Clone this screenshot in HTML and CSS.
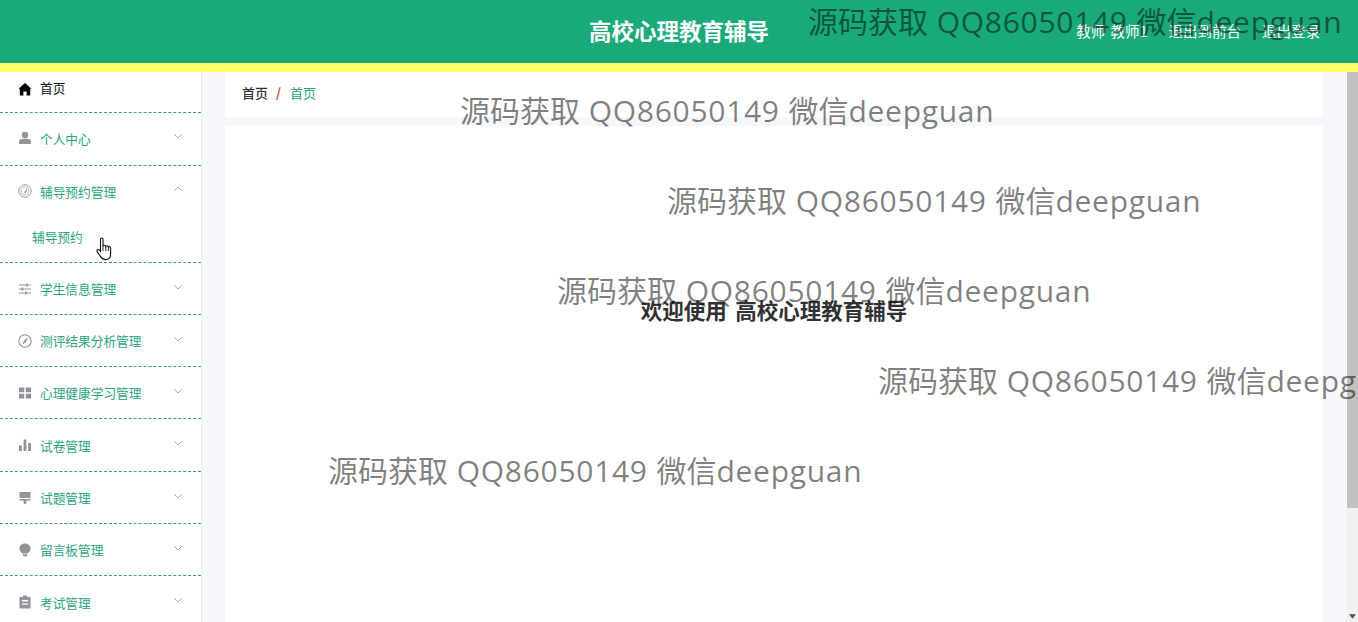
FILE: index.html
```html
<!DOCTYPE html>
<html lang="zh">
<head>
<meta charset="utf-8">
<title>高校心理教育辅导</title>
<link rel="stylesheet" href="styles.css">
</head>
<body>
<header class="topbar">
  <div class="brand">高校心理教育辅导</div>
  <nav class="topnav">
    <span class="user">教师 教师1</span>
    <span>退出到前台</span>
    <span>退出登录</span>
  </nav>
</header>
<div class="main">
  <aside class="sidebar">
    <div class="menu-item home">
      <svg class="ico" viewBox="0 0 14 14"><path d="M7 1 L.6 6.8 H1.8 V13.6 H5.4 V9.6 H8.6 V13.6 H12.2 V6.8 H13.4 Z" fill="#000"/></svg>
      <span>首页</span>
    </div>
    <div class="menu-item tall first">
      <svg class="ico" viewBox="0 0 14 14"><circle cx="7" cy="4" r="3.2" fill="#909399"/><path d="M1 13 V10.5 C1 8.5 4 7.8 7 7.8 C10 7.8 13 8.5 13 10.5 V13 Z" fill="#909399"/></svg>
      <span>个人中心</span>
      <svg class="arrow" viewBox="0 0 10 6"><path d="M1 1 L5 5 L9 1" /></svg>
    </div>
    <div class="menu-group">
      <div class="menu-item open">
        <svg class="ico" viewBox="0 0 14 14"><circle cx="7" cy="7" r="6.2" fill="none" stroke="#909399"/><circle cx="7" cy="7" r="4" fill="none" stroke="#909399" stroke-width=".6"/><path d="M6 8.5 L9.5 3.5 L8 9 Z" fill="#909399"/></svg>
        <span>辅导预约管理</span>
        <svg class="arrow" viewBox="0 0 10 6"><path d="M1 5 L5 1 L9 5" /></svg>
      </div>
      <div class="submenu">辅导预约</div>
    </div>
    <div class="menu-item">
      <svg class="ico" viewBox="0 0 14 14"><path d="M1 3 H13 M1 7 H13 M1 11 H13" stroke="#909399" fill="none"/><rect x="8" y="1.5" width="1.6" height="3" fill="#909399"/><rect x="3.6" y="5.5" width="1.6" height="3" fill="#909399"/><rect x="7" y="9.5" width="1.6" height="3" fill="#909399"/></svg>
      <span>学生信息管理</span>
      <svg class="arrow" viewBox="0 0 10 6"><path d="M1 1 L5 5 L9 1" /></svg>
    </div>
    <div class="menu-item">
      <svg class="ico" viewBox="0 0 14 14"><circle cx="7" cy="7" r="6.2" fill="none" stroke="#909399" stroke-width="1.1"/><path d="M6 6.3 L9.6 3.6 L8 8 Z" fill="#909399"/><path d="M6 6.3 L4.6 10.4 L8 8 Z" fill="#909399"/></svg>
      <span>测评结果分析管理</span>
      <svg class="arrow" viewBox="0 0 10 6"><path d="M1 1 L5 5 L9 1" /></svg>
    </div>
    <div class="menu-item">
      <svg class="ico" viewBox="0 0 14 14"><path d="M1 1.5 H6.2 V6.2 H1 Z M7.8 1.5 H13 V6.2 H7.8 Z M1 7.8 H6.2 V12.5 H1 Z M7.8 7.8 H13 V12.5 H7.8 Z" fill="#909399"/></svg>
      <span>心理健康学习管理</span>
      <svg class="arrow" viewBox="0 0 10 6"><path d="M1 1 L5 5 L9 1" /></svg>
    </div>
    <div class="menu-item tall">
      <svg class="ico" viewBox="0 0 14 14"><path d="M1 7.5 H3.8 V13 H1 Z M5.6 1.5 H8.4 V13 H5.6 Z M10.2 5 H13 V13 H10.2 Z" fill="#909399"/></svg>
      <span>试卷管理</span>
      <svg class="arrow" viewBox="0 0 10 6"><path d="M1 1 L5 5 L9 1" /></svg>
    </div>
    <div class="menu-item">
      <svg class="ico" viewBox="0 0 14 14"><path d="M1.5 1 H12.5 V7 H1.5 Z M1.5 8 H12.5 V9.6 H8.4 V12 L7 13.5 L5.6 12 V9.6 H1.5 Z" fill="#909399"/></svg>
      <span>试题管理</span>
      <svg class="arrow" viewBox="0 0 10 6"><path d="M1 1 L5 5 L9 1" /></svg>
    </div>
    <div class="menu-item">
      <svg class="ico" viewBox="0 0 14 14"><path d="M7 .6 C10.4 .6 12.6 3 12.6 5.8 C12.6 8 11 9.2 9.6 10.4 H4.4 C3 9.2 1.4 8 1.4 5.8 C1.4 3 3.6 .6 7 .6 Z M4.8 11.2 H9.2 V12.4 L8 13.6 H6 L4.8 12.4 Z" fill="#909399"/></svg>
      <span>留言板管理</span>
      <svg class="arrow" viewBox="0 0 10 6"><path d="M1 1 L5 5 L9 1" /></svg>
    </div>
    <div class="menu-item last">
      <svg class="ico" viewBox="0 0 14 14"><path fill-rule="evenodd" d="M5 .6 H9 V2 H12.5 V13.6 H1.5 V2 H5 Z M4 5 V6.4 H10 V5 Z M4 8.4 V9.8 H10 V8.4 Z" fill="#909399"/></svg>
      <span>考试管理</span>
      <svg class="arrow" viewBox="0 0 10 6"><path d="M1 1 L5 5 L9 1" /></svg>
    </div>
  </aside>
  <main class="content">
    <div class="crumbs">
      <b class="crumb-home">首页</b>
      <i class="crumb-sep">/</i>
      <span class="crumb-cur">首页</span>
    </div>
    <section class="welcome">
      <h1>欢迎使用 高校心理教育辅导</h1>
    </section>
  </main>
  <div class="scrollbar">
    <div class="thumb"></div>
    <svg class="scroll-down" viewBox="0 0 8 5"><path d="M0 0 H8 L4 5 Z" fill="#505050"/></svg>
  </div>
</div>
<div class="wm wm1">源码获取 <span class="wm-latin">QQ86050149</span> 微信<span class="wm-latin">deepguan</span></div>
<div class="wm wm2">源码获取 <span class="wm-latin">QQ86050149</span> 微信<span class="wm-latin">deepguan</span></div>
<div class="wm wm3">源码获取 <span class="wm-latin">QQ86050149</span> 微信<span class="wm-latin">deepguan</span></div>
<div class="wm wm4">源码获取 <span class="wm-latin">QQ86050149</span> 微信<span class="wm-latin">deepguan</span></div>
<div class="wm wm5">源码获取 <span class="wm-latin">QQ86050149</span> 微信<span class="wm-latin">deepguan</span></div>
<div class="wm wm6">源码获取 <span class="wm-latin">QQ86050149</span> 微信<span class="wm-latin">deepguan</span></div>
<svg class="cursor" viewBox="0 0 16 24"><path d="M4.5 2.2 C4.5 .6 7 .6 7 2.2 V9 C7.4 8 9.6 8 9.8 9.4 C10.2 8.4 12.2 8.6 12.4 10 C12.9 9.2 14.6 9.6 14.6 11 V17 C14.6 20 13.4 22.6 9.6 22.6 C6.8 22.6 5.6 21.4 4.4 19.4 L1.2 14.6 C.4 13 2.2 11.8 3.4 13 L4.5 14.4 Z" fill="#fff" stroke="#111" stroke-width="1.1"/><path d="M7 9 V14 M9.8 9.4 V14 M12.4 10 V14" stroke="#111" stroke-width=".9" fill="none"/></svg>
</body>
</html>
```

FILE: styles.css
```css
* { box-sizing: border-box; }
html, body { margin: 0; height: 100%; overflow: hidden; }
body {
  font-family: "Noto Sans CJK SC", "Noto Sans", sans-serif;
  background: #f5f7fa;
  display: flex;
  flex-direction: column;
}
.topbar {
  flex: none;
  height: 72px;
  background: #1aaa79;
  border-bottom: 9px solid #ffff66;
  display: flex;
  align-items: center;
  justify-content: center;
  position: relative;
  color: #fff;
}
.brand { font-size: 22.5px; font-weight: 700; line-height: 32px; margin-bottom: 4px; }
.topnav {
  position: absolute;
  right: 38px;
  top: 22px;
  display: flex;
  gap: 21px;
  font-size: 14.5px;
  line-height: 18px;
  color: #fff;
}
.user { word-spacing: 2px; }
.main { flex: 1; display: flex; min-height: 0; }
.sidebar {
  flex: none;
  width: 202px;
  background: #fff;
  border-right: 1px solid #e6e9ee;
  overflow: hidden;
}
.menu-item {
  height: 52px;
  padding: 0 16px 0 18px;
  display: flex;
  align-items: center;
  gap: 8px;
  font-size: 12.7px;
  color: #2aa480;
  border-bottom: 1px dashed #3a9f80;
  position: relative;
}
.menu-item.tall { height: 53px; }
.menu-item.first { padding-bottom: 2px; }
.menu-item.home { height: 41px; color: #111; padding-bottom: 9px; }
.menu-item.home .ico { margin-top: 3px; }
.menu-item.open { border-bottom: 0; height: 52px; padding-bottom: 2px; }
.menu-item.last { border-bottom: 0; }
.menu-group { border-bottom: 1px dashed #3a9f80; }
.ico { width: 14px; height: 14px; flex: none; }
.arrow {
  position: absolute;
  right: 18px;
  top: 21px;
  width: 10px;
  height: 6px;
  fill: none;
  stroke: #a8abb2;
  stroke-width: 1;
}
.first .arrow, .open .arrow { top: 20px; }
.submenu {
  height: 44px;
  padding: 0 0 0 32px;
  font-size: 12.7px;
  line-height: 38px;
  color: #2aa480;
}
.content {
  flex: 1;
  min-width: 0;
  padding: 0 24px 0 23px;
  display: flex;
  flex-direction: column;
  gap: 9px;
}
.crumbs {
  flex: none;
  height: 45px;
  background: #fff;
  display: flex;
  align-items: center;
  gap: 8px;
  padding: 0 0 4px 17px;
  font-size: 13px;
}
.crumb-home { font-weight: 500; color: #303133; }
.crumb-sep { color: #c8502f; font-style: normal; font-weight: 700; font-size: 13px; }
.crumb-cur { color: #2aa480; margin-left: 1px; }
.welcome { flex: 1; background: #fff; padding-top: 168px; }
.welcome h1 {
  margin: 0;
  font-size: 21.5px;
  line-height: 32px;
  font-weight: 700;
  word-spacing: 3.5px;
  color: #303133;
  text-align: center;
}
.scrollbar {
  flex: none;
  width: 11px;
  background: #f1f1f1;
  position: relative;
}
.thumb { height: 436px; background: #c1c1c1; }
.scroll-down { position: absolute; left: 2px; bottom: 3px; width: 7px; height: 5px; }
.wm {
  position: absolute;
  font-family: "Open Sans", "Noto Sans CJK SC", sans-serif;
  font-size: 30px;
  line-height: 40px;
  word-spacing: 1px;
  color: rgba(0, 0, 0, 0.5);
  white-space: nowrap;
  pointer-events: none;
}
.wm-latin { letter-spacing: 0.7px; }
.wm1 { left: 808px; top: 2px; }
.wm2 { left: 460px; top: 91px; }
.wm3 { left: 667px; top: 181px; }
.wm4 { left: 557px; top: 271px; }
.wm5 { left: 878px; top: 361px; }
.wm6 { left: 328px; top: 451px; }
.cursor { position: absolute; left: 96px; top: 237px; width: 16px; height: 24px; }
```
